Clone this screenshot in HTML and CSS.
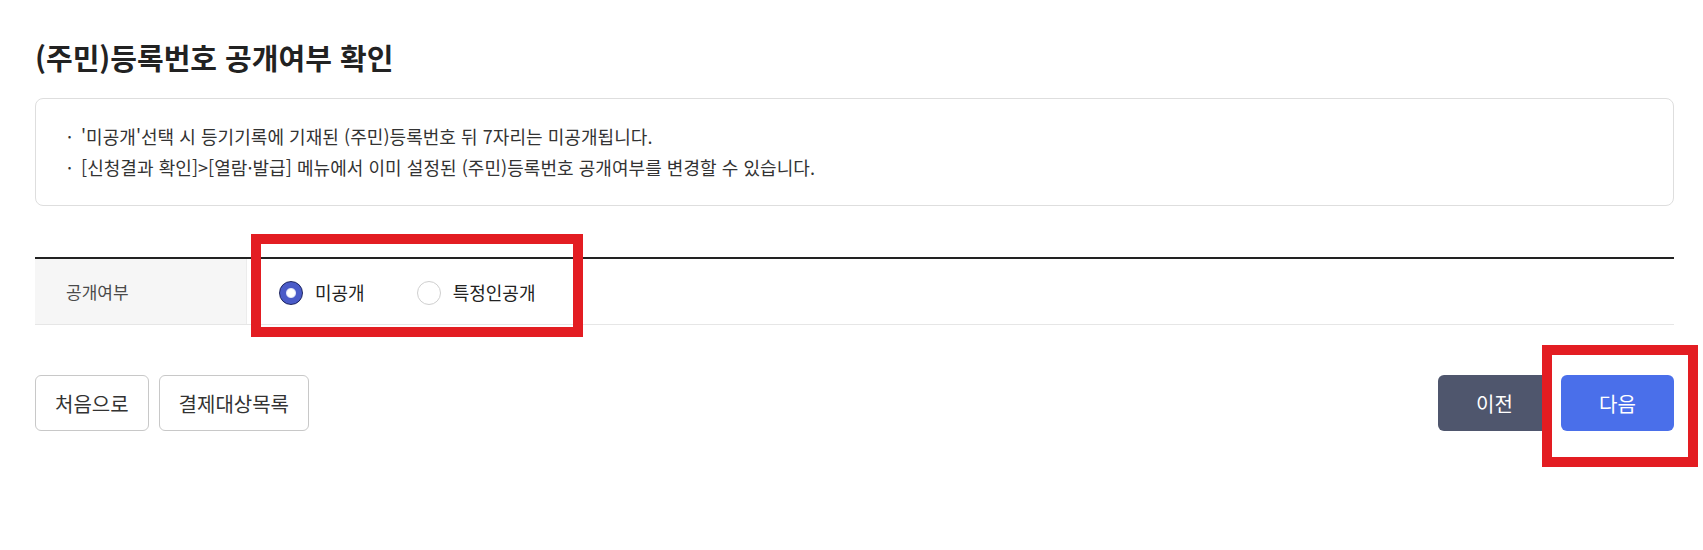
FILE: index.html
```html
<!DOCTYPE html>
<html lang="ko">
<head>
<meta charset="utf-8">
<title>(주민)등록번호 공개여부 확인</title>
<link rel="stylesheet" href="styles.css">
</head>
<body>
<div class="page">
  <h1 class="title">(주민)등록번호 공개여부 확인</h1>
  <div class="notice">
    <ul class="notice-list">
      <li>'미공개'선택 시 등기기록에 기재된 (주민)등록번호 뒤 7자리는 미공개됩니다.</li>
      <li>[신청결과 확인]&gt;[열람·발급] 메뉴에서 이미 설정된 (주민)등록번호 공개여부를 변경할 수 있습니다.</li>
    </ul>
  </div>
  <div class="form-table">
    <div class="row">
      <div class="th">공개여부</div>
      <div class="td">
        <label class="radio"><input type="radio" name="open" checked><span>미공개</span></label>
        <label class="radio"><input type="radio" name="open"><span>특정인공개</span></label>
      </div>
    </div>
  </div>
  <div class="actions">
    <div class="group">
      <button class="btn btn-line">처음으로</button>
      <button class="btn btn-line">결제대상목록</button>
    </div>
    <div class="group">
      <button class="btn btn-dark">이전</button>
      <button class="btn btn-primary">다음</button>
    </div>
  </div>
  <div class="mark mark-radio"></div>
  <div class="mark mark-next"></div>
</div>
</body>
</html>
```
FILE: styles.css
```css
* { box-sizing: border-box; }
html, body { margin: 0; padding: 0; background: #fff; }
body {
  font-family: "Noto Sans CJK KR", "Noto Sans", sans-serif;
  color: #333;
}
.page {
  position: relative;
  padding: 37px 29px 0 35px;
  width: 1703px;
  height: 550px;
}
.title {
  margin: 0 0 21px;
  font-size: 29px;
  line-height: 40px;
  font-weight: 700;
  color: #222;
}
.notice {
  border: 1px solid #dedede;
  border-radius: 8px;
  padding: 22px 31px;
}
.notice-list {
  list-style: none;
  margin: 0;
  padding: 0;
  font-size: 18px;
  line-height: 31px;
  color: #333;
  letter-spacing: 0.05px;
}
.notice-list li { display: flex; }
.notice-list li::before {
  content: "·";
  flex: 0 0 14px;
}
.form-table {
  margin-top: 51px;
  border-top: 2px solid #222;
}
.row {
  display: flex;
  height: 66px;
  border-bottom: 1px solid #e6e6e6;
}
.th {
  width: 212px;
  background: #f6f6f6;
  border-right: 1px solid #ececec;
  display: flex;
  align-items: center;
  padding-left: 31px;
  font-size: 17px;
  color: #4a4a4a;
}
.td {
  display: flex;
  align-items: center;
  padding-left: 32px;
  gap: 52px;
}
.radio {
  display: flex;
  align-items: center;
  gap: 12px;
  font-size: 18px;
  color: #222;
  cursor: pointer;
}
.radio input {
  appearance: none;
  -webkit-appearance: none;
  margin: 2px 0 0;
  width: 24px;
  height: 24px;
  border-radius: 50%;
  border: 1px solid #cfcfcf;
  background: #fff;
}
.radio input:checked {
  background: radial-gradient(circle, #fff 0 3.5px, #dfe3f7 4.5px, #4a5bc8 5.5px);
  border: 1.5px solid #1c2460;
}
.actions {
  margin-top: 50px;
  display: flex;
  justify-content: space-between;
}
.group { display: flex; gap: 10px; }
.btn {
  height: 56px;
  padding: 0 19px;
  font-family: inherit;
  font-size: 20px;
  border-radius: 6px;
  border: 1px solid #c8c8c8;
  background: #fff;
  color: #333;
}
.btn-dark, .btn-primary {
  min-width: 113px;
  border: none;
  color: #fff;
}
.btn-dark { background: #4f566d; }
.btn-primary { background: #4a6fea; }
.mark {
  position: absolute;
  border: 10px solid #e31d22;
}
.mark-radio { left: 251px; top: 234px; width: 332px; height: 103px; }
.mark-next { left: 1542px; top: 345px; width: 156px; height: 122px; }
```
